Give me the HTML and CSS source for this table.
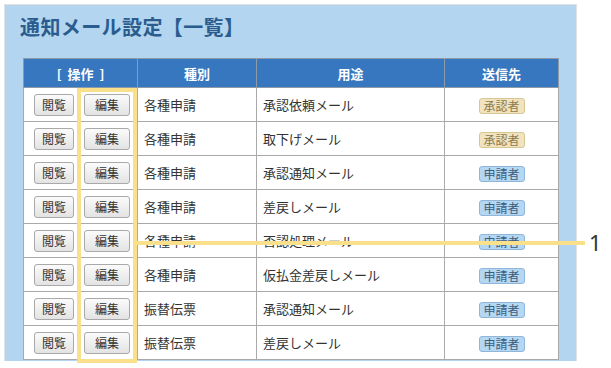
FILE: index.html
```html
<!DOCTYPE html>
<html lang="ja">
<head>
<meta charset="utf-8">
<link rel="stylesheet" href="styles.css">
</head>
<body>
<div class="page">
  <div class="panel">
    <h1 class="title">通知メール設定【一覧】</h1>
    <table class="list">
      <colgroup>
        <col class="c-op"><col class="c-kind"><col class="c-use"><col class="c-to">
      </colgroup>
      <thead>
        <tr><th>[&nbsp;&nbsp;操作&nbsp;&nbsp;]</th><th>種別</th><th>用途</th><th>送信先</th></tr>
      </thead>
      <tbody>
        <tr><td class="ops"><span class="btn b-view">閲覧</span><span class="btn b-edit">編集</span></td><td>各種申請</td><td>承認依頼メール</td><td class="to"><span class="badge approver">承認者</span></td></tr>
        <tr><td class="ops"><span class="btn b-view">閲覧</span><span class="btn b-edit">編集</span></td><td>各種申請</td><td>取下げメール</td><td class="to"><span class="badge approver">承認者</span></td></tr>
        <tr><td class="ops"><span class="btn b-view">閲覧</span><span class="btn b-edit">編集</span></td><td>各種申請</td><td>承認通知メール</td><td class="to"><span class="badge applicant">申請者</span></td></tr>
        <tr><td class="ops"><span class="btn b-view">閲覧</span><span class="btn b-edit">編集</span></td><td>各種申請</td><td>差戻しメール</td><td class="to"><span class="badge applicant">申請者</span></td></tr>
        <tr><td class="ops"><span class="btn b-view">閲覧</span><span class="btn b-edit">編集</span></td><td>各種申請</td><td>否認処理メール</td><td class="to"><span class="badge applicant">申請者</span></td></tr>
        <tr><td class="ops"><span class="btn b-view">閲覧</span><span class="btn b-edit">編集</span></td><td>各種申請</td><td>仮払金差戻しメール</td><td class="to"><span class="badge applicant">申請者</span></td></tr>
        <tr><td class="ops"><span class="btn b-view">閲覧</span><span class="btn b-edit">編集</span></td><td>振替伝票</td><td>承認通知メール</td><td class="to"><span class="badge applicant">申請者</span></td></tr>
        <tr><td class="ops"><span class="btn b-view">閲覧</span><span class="btn b-edit">編集</span></td><td>振替伝票</td><td>差戻しメール</td><td class="to"><span class="badge applicant">申請者</span></td></tr>
      </tbody>
    </table>
  </div>
  <div class="hl-box"></div>
  <div class="callout-line"></div>
  <div class="callout-num">1</div>
</div>
</body>
</html>
```

FILE: styles.css
```css
html, body {
  margin: 0;
  padding: 0;
  background: #ffffff;
}
body {
  font-family: "Noto Sans CJK JP", "Noto Sans", sans-serif;
  color: #333333;
  overflow: hidden;
}
.page {
  position: relative;
  width: 611px;
  height: 368px;
  padding: 4px 0 0 4px;
  box-sizing: border-box;
}
.panel {
  width: 573px;
  height: 357px;
  box-sizing: border-box;
  background: #b3d5ef;
  border: 1px solid #e2e2e2;
  border-bottom: none;
  padding: 9px 18px 0 18px;
}
.title {
  margin: 0 0 19px -3px;
  font-size: 20px;
  line-height: 25px;
  font-weight: bold;
  color: #2b5c8e;
  letter-spacing: 0.4px;
}
.list {
  border-collapse: collapse;
  width: 535px;
  background: #ffffff;
  border: 1px solid #999999;
  table-layout: fixed;
  font-size: 13px;
}
.c-op { width: 114px; }
.c-kind { width: 119px; }
.c-use { width: 188px; }
.c-to { width: 114px; }
.list th {
  background: #3777bf;
  color: #ffffff;
  font-weight: bold;
  font-size: 13px;
  height: 28px;
  padding: 0;
  border: 1px solid #8d9aa8;
  text-align: center;
}
.list td {
  height: 33px;
  padding: 0 0 0 6px;
  border: 1px solid #aaaaaa;
  vertical-align: middle;
  white-space: nowrap;
}
.list td.ops {
  padding-left: 10px;
}
.list td.to {
  padding: 0;
  text-align: center;
}
.btn {
  display: inline-block;
  box-sizing: border-box;
  height: 22px;
  line-height: 20px;
  text-align: center;
  font-size: 12px;
  color: #333333;
  border: 1px solid #a9a9a9;
  border-radius: 3px;
  background: linear-gradient(#fbfbfb, #e3e3e3);
  vertical-align: middle;
}
.b-view { width: 40px; margin-right: 10px; }
.b-edit { width: 46px; }
.badge {
  display: inline-block;
  box-sizing: border-box;
  width: 46px;
  height: 16px;
  line-height: 14px;
  font-size: 12px;
  border-radius: 3px;
  border: 1px solid;
  vertical-align: middle;
}
.approver {
  background: #f0e3bd;
  border-color: #d6c794;
  color: #8c7b52;
}
.applicant {
  background: #b6d7f1;
  border-color: #8db6da;
  color: #3b5e80;
}
.hl-box {
  position: absolute;
  left: 77px;
  top: 88px;
  width: 60px;
  height: 275px;
  box-sizing: border-box;
  border: 4px solid #fbe08c;
}
.callout-line {
  position: absolute;
  left: 137px;
  top: 241px;
  width: 448px;
  height: 4px;
  background: #fbe08c;
}
.callout-num {
  position: absolute;
  left: 589px;
  top: 229px;
  font-size: 22px;
  line-height: 26px;
  color: #333333;
  font-family: "Noto Sans", sans-serif;
}
```
